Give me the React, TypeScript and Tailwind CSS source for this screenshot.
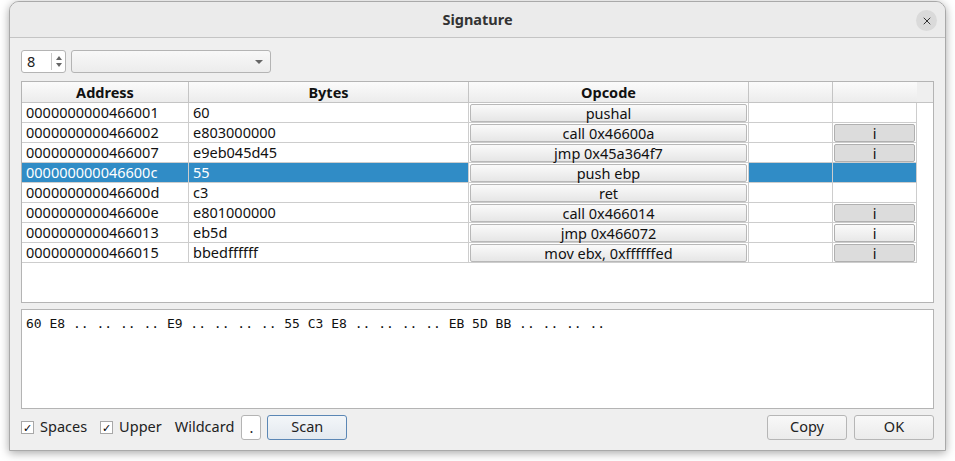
import { X } from "lucide-react";

const rows = [
  { addr: "0000000000466001", bytes: "60", op: "pushal", info: false },
  { addr: "0000000000466002", bytes: "e803000000", op: "call 0x46600a", info: true },
  { addr: "0000000000466007", bytes: "e9eb045d45", op: "jmp 0x45a364f7", info: true },
  { addr: "000000000046600c", bytes: "55", op: "push ebp", info: false, selected: true },
  { addr: "000000000046600d", bytes: "c3", op: "ret", info: false },
  { addr: "000000000046600e", bytes: "e801000000", op: "call 0x466014", info: true },
  { addr: "0000000000466013", bytes: "eb5d", op: "jmp 0x466072", info: true, hover: true },
  { addr: "0000000000466015", bytes: "bbedffffff", op: "mov ebx, 0xffffffed", info: true },
];

const ui = { fontFamily: '"Noto Sans", "Open Sans", sans-serif' };

function Check({ label }: { label: string }) {
  return (
    <label className="flex items-center gap-[6px]">
      <span className="w-[13px] h-[13px] bg-white border border-[#a8a8a8] flex items-center justify-center text-[11px] leading-none text-black">
        ✓
      </span>
      <span>{label}</span>
    </label>
  );
}

function Btn({ children, blue }: { children: string; blue?: boolean }) {
  return (
    <button
      className={
        "h-[25px] w-[80px] rounded-[3px] border text-[14.5px] text-[#222] " +
        (blue
          ? "border-[#5b87b5] bg-gradient-to-b from-[#f3f6f9] to-[#e3e9ef]"
          : "border-[#b6b6b6] bg-gradient-to-b from-[#f8f8f8] to-[#ebebeb]")
      }
    >
      {children}
    </button>
  );
}

export default function App() {
  return (
    <div className="w-[955px] h-[461px] bg-white pl-[9px] pt-[1px]" style={ui}>
      <div className="w-[937px] h-[450px] rounded-t-[10px] border border-[#a9a9a9] bg-[#efefef] shadow-[0_2px_10px_rgba(0,0,0,0.35)] flex flex-col overflow-hidden text-[14.5px] text-[#222]">
        {/* title bar */}
        <div className="relative h-[36px] shrink-0 bg-[#ebebeb] border-b border-[#c4c4c4] flex items-center justify-center">
          <span className="font-bold text-[14.5px] text-[#333]">Signature</span>
          <span className="absolute right-[8px] top-[8px] w-[21px] h-[21px] rounded-full bg-[#dadada] flex items-center justify-center">
            <X className="w-[12px] h-[12px] text-[#333]" strokeWidth={2} />
          </span>
        </div>

        <div className="flex-1 flex flex-col px-[11px] pt-[12px] pb-[10px]">
          {/* toolbar */}
          <div className="flex items-center gap-[5px] h-[23px]">
            <div className="w-[45px] h-[23px] bg-white border border-[#b4b4b4] rounded-[3px] flex">
              <span className="flex-1 pl-[5px] leading-[21px]">8</span>
              <span className="w-[14px] my-[2px] border-l border-[#c8c8c8] flex flex-col items-center justify-center gap-[3px]">
                <span className="w-0 h-0 border-l-[3px] border-r-[3px] border-b-[4px] border-l-transparent border-r-transparent border-b-[#666]" />
                <span className="w-0 h-0 border-l-[3px] border-r-[3px] border-t-[4px] border-l-transparent border-r-transparent border-t-[#666]" />
              </span>
            </div>
            <div className="w-[200px] h-[23px] rounded-[3px] border border-[#b4b4b4] bg-gradient-to-b from-[#f8f8f8] to-[#ececec] flex items-center justify-end pr-[7px]">
              <span className="w-0 h-0 border-l-[4px] border-r-[4px] border-t-[4px] border-l-transparent border-r-transparent border-t-[#666]" />
            </div>
          </div>

          {/* table */}
          <div className="mt-[8px] h-[222px] border border-[#b4b4b4] bg-white flex flex-col">
            <div className="flex h-[21px] border-b border-[#c4c4c4] bg-[#efefef] font-bold text-[#111]">
              <div className="w-[167px] border-r border-[#c4c4c4] bg-gradient-to-b from-[#fbfbfb] to-[#ececec] text-center leading-[20px]">Address</div>
              <div className="w-[280px] border-r border-[#c4c4c4] bg-gradient-to-b from-[#fbfbfb] to-[#ececec] text-center leading-[20px]">Bytes</div>
              <div className="w-[280px] border-r border-[#c4c4c4] bg-gradient-to-b from-[#fbfbfb] to-[#ececec] text-center leading-[20px]">Opcode</div>
              <div className="w-[84px] border-r border-[#c4c4c4] bg-gradient-to-b from-[#fbfbfb] to-[#ececec]" />
              <div className="w-[84px] bg-gradient-to-b from-[#fbfbfb] to-[#ececec]" />
            </div>
            {rows.map((r) => {
              const sel = r.selected;
              const cell = sel ? "bg-[#308cc6] text-white" : "text-[#111]";
              return (
                <div key={r.addr} className="flex h-[20px] leading-[19px]">
                  <div className={"w-[167px] border-r border-b border-[#cdcdcd] pl-[4px] " + cell}>{r.addr}</div>
                  <div className={"w-[280px] border-r border-b border-[#cdcdcd] pl-[4px] " + cell}>{r.bytes}</div>
                  <div className="w-[280px] border-r border-b border-[#cdcdcd] p-[1px] pb-0">
                    <div className="h-[18px] rounded-[2px] border border-[#b8b8b8] bg-gradient-to-b from-[#fafafa] to-[#e6e6e6] text-center leading-[16px] text-[#111]">
                      {r.op}
                    </div>
                  </div>
                  <div className={"w-[84px] border-r border-b border-[#cdcdcd] " + cell} />
                  <div className={"w-[84px] border-r border-b border-[#cdcdcd] p-[1px] pb-0 " + cell}>
                    {r.info && (
                      <div
                        className={
                          "h-[18px] rounded-[2px] border border-[#b0b0b0] text-center leading-[16px] text-[#111] " +
                          (r.hover ? "bg-gradient-to-b from-[#fafafa] to-[#e8e8e8]" : "bg-[#dcdcdc]")
                        }
                      >
                        i
                      </div>
                    )}
                  </div>
                </div>
              );
            })}
          </div>

          {/* signature text */}
          <div
            className="mt-[6px] h-[100px] border border-[#b4b4b4] bg-white px-[4px] pt-[6px] text-[13px] leading-[16px] text-[#111] whitespace-pre"
            style={{ fontFamily: '"DejaVu Sans Mono", monospace' }}
          >
            60 E8 .. .. .. .. E9 .. .. .. .. 55 C3 E8 .. .. .. .. EB 5D BB .. .. .. ..
          </div>

          {/* bottom controls */}
          <div className="mt-[5px] h-[26px] flex items-center">
            <Check label="Spaces" />
            <div className="ml-[13px]">
              <Check label="Upper" />
            </div>
            <span className="ml-[13px]">Wildcard</span>
            <div className="ml-[7px] w-[20px] h-[25px] bg-white border border-[#b4b4b4] rounded-[3px] text-center leading-[22px]">.</div>
            <div className="ml-[6px]">
              <Btn blue>Scan</Btn>
            </div>
            <div className="flex-1" />
            <Btn>Copy</Btn>
            <div className="ml-[7px]">
              <Btn>OK</Btn>
            </div>
          </div>
        </div>
      </div>
    </div>
  );
}
